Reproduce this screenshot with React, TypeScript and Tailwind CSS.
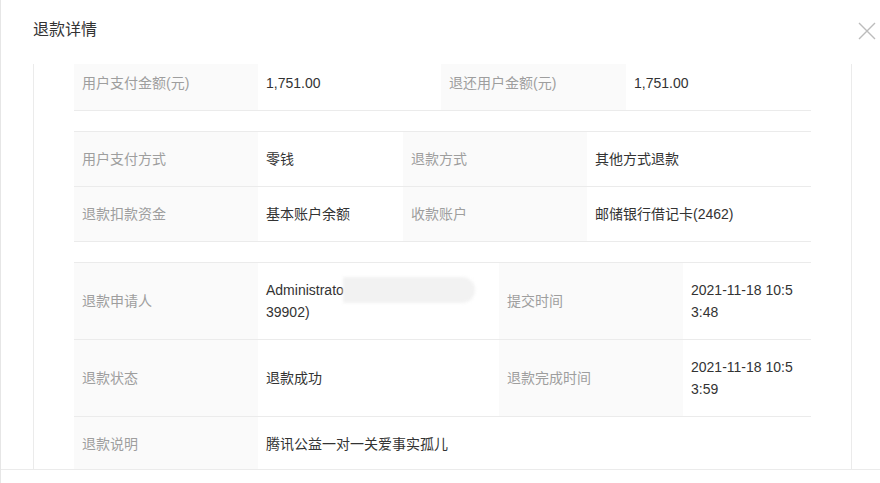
import React from 'react'

const font = { fontFamily: '"Liberation Sans", "Noto Sans CJK SC", sans-serif' }

function Label({ children }: { children: React.ReactNode }) {
  return (
    <div className="bg-[#fafafa] px-[8px] py-[16px] leading-[22px] text-[#9e9e9e] flex items-center border-b border-[#ebebeb]">
      {children}
    </div>
  )
}

function Value({ children, span }: { children: React.ReactNode; span?: boolean }) {
  return (
    <div
      className={
        'px-[8px] py-[16px] leading-[22px] text-[#333] flex items-center border-b border-[#ebebeb]' +
        (span ? ' col-span-3' : '')
      }
    >
      {children}
    </div>
  )
}

export default function App() {
  return (
    <div
      className="w-[880px] h-[483px] bg-white border-l border-[#e6e6e6] flex flex-col overflow-hidden text-[14px]"
      style={font}
    >
      <div className="h-[64px] shrink-0 flex items-start justify-between pl-[32px] pr-[4px] pt-[19px]">
        <h1 className="text-[16px] leading-[22px] text-[#333]">退款详情</h1>
        <svg width="18" height="18" viewBox="0 0 18 18" className="mt-[3px]">
          <path d="M1 1L17 17M17 1L1 17" stroke="#bcbcbc" strokeWidth="1.4" />
        </svg>
      </div>

      <div className="h-[405px] shrink-0 ml-[32px] mr-[28px] border-x border-[#ebebeb] px-[40px] overflow-hidden">
        <div className="-mt-[8px] grid grid-cols-[184px_183px_185px_1fr]">
          <Label>用户支付金额(元)</Label>
          <Value>1,751.00</Value>
          <Label>退还用户金额(元)</Label>
          <Value>1,751.00</Value>
        </div>

        <div className="mt-[20px] grid grid-cols-[184px_145px_184px_1fr] border-t border-[#ebebeb]">
          <Label>用户支付方式</Label>
          <Value>零钱</Value>
          <Label>退款方式</Label>
          <Value>其他方式退款</Value>
          <Label>退款扣款资金</Label>
          <Value>基本账户余额</Value>
          <Label>收款账户</Label>
          <Value>邮储银行借记卡(2462)</Value>
        </div>

        <div className="mt-[20px] grid grid-cols-[184px_241px_184px_1fr] border-t border-[#ebebeb]">
          <Label>退款申请人</Label>
          <Value>
            <div>
              <div className="flex items-center h-[22px]">
                <span>Administrato</span>
                <span className="-ml-[1px] -my-[2px] inline-block w-[132px] h-[26px] rounded-r-[14px] bg-[#f2f2f2] blur-[1.5px]" />
              </div>
              <div>39902)</div>
            </div>
          </Value>
          <Label>提交时间</Label>
          <Value>
            <div>
              <div>2021-11-18 10:5</div>
              <div>3:48</div>
            </div>
          </Value>
          <Label>退款状态</Label>
          <Value>退款成功</Value>
          <Label>退款完成时间</Label>
          <Value>
            <div>
              <div>2021-11-18 10:5</div>
              <div>3:59</div>
            </div>
          </Value>
          <Label>退款说明</Label>
          <Value span>腾讯公益一对一关爱事实孤儿</Value>
        </div>
      </div>

      <div className="flex-1 border-t border-[#ebebeb]" />
    </div>
  )
}
